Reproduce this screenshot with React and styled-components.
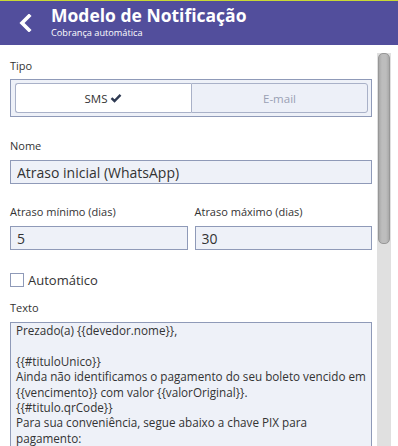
import React from "react";
import styled, { createGlobalStyle } from "styled-components";

const Global = createGlobalStyle`
  html, body { margin: 0; padding: 0; background: #fff; }
  body { font-family: "Open Sans", "Lato", sans-serif; color: #333; }
  * { box-sizing: border-box; }
`;

const Screen = styled.div`
  width: 398px;
  height: 446px;
  display: flex;
  flex-direction: column;
  overflow: hidden;
`;

const Header = styled.header`
  flex: 0 0 45px;
  background: #524e9c;
  border-top: 1px solid #c9d834;
  display: flex;
  align-items: center;
  padding-left: 18px;
  gap: 19px;
  color: #fff;
`;

const Back = styled.button`
  border: 0;
  background: none;
  padding: 0;
  width: 14px;
  height: 18px;
  display: flex;
  cursor: pointer;
`;

const Titles = styled.div`
  display: flex;
  flex-direction: column;
  gap: 2px;
  margin-top: -3px;
`;

const Title = styled.h1`
  margin: 0;
  font-size: 17.5px;
  font-weight: 700;
  line-height: 19px;
`;

const Subtitle = styled.div`
  font-size: 9.2px;
  line-height: 11px;
`;

const Body = styled.div`
  flex: 1;
  min-height: 0;
  display: flex;
`;

const Form = styled.div`
  flex: 1;
  min-width: 0;
  overflow: hidden;
  padding: 13px 0 0 10px;
  display: flex;
  flex-direction: column;
`;

const Rail = styled.div`
  flex: 0 0 14px;
  margin: 8px 7px 0 5px;
  background: #e0e0e0;
  display: flex;
  flex-direction: column;
  padding: 0 1px;
`;

const Thumb = styled.div`
  height: 191px;
  background: linear-gradient(90deg, #a9a9a9, #bdbdbd 30%, #bdbdbd 70%, #a9a9a9);
  border: 1px solid #979797;
  border-radius: 5px;
`;

const Field = styled.div`
  display: flex;
  flex-direction: column;
  margin-bottom: ${(p) => p.$mb || 0}px;
  flex: 1;
  min-width: 0;
`;

const Label = styled.label`
  font-size: 11px;
  color: #333;
  line-height: 16px;
  margin-bottom: ${(p) => p.$mb || 6}px;
`;

const Segmented = styled.div`
  display: flex;
  border: 1px solid #8f9ab8;
  background: #eef1f8;
  padding: 3px 3px 3px 4px;
  height: 38px;
`;

const SegButton = styled.button`
  flex: 1;
  border: 1px solid #a9b1c8;
  border-radius: ${(p) => (p.$first ? "3px 0 0 3px" : "0 3px 3px 0")};
  ${(p) => (p.$first ? "border-right: 0;" : "")}
  background: ${(p) => (p.$active ? "#fff" : "#edf0f8")};
  color: ${(p) => (p.$active ? "#333" : "#9aa0b4")};
  font-family: inherit;
  font-size: 11.5px;
  display: flex;
  align-items: center;
  justify-content: center;
  gap: 3px;
  padding: 0;
  cursor: pointer;
`;

const Input = styled.input`
  height: 24px;
  width: 100%;
  border: 1px solid #8f9ab8;
  background: #eef1f8;
  font-family: inherit;
  font-size: 14px;
  color: #333;
  padding: 0 6px;
  outline: none;
`;

const Row = styled.div`
  display: flex;
  gap: 7px;
  margin-bottom: 22px;
`;

const Check = styled.label`
  display: flex;
  align-items: center;
  gap: 4px;
  height: 16px;
  font-size: 13px;
  color: #333;
  margin-bottom: 12px;
`;

const Box = styled.span`
  width: 14px;
  height: 14px;
  border: 1px solid #8f9ab8;
  background: #fff;
  display: inline-block;
`;

const TextArea = styled.textarea`
  width: 100%;
  height: 505px;
  border: 1px solid #8f9ab8;
  background: #eef1f8;
  font-family: inherit;
  font-size: 11.7px;
  line-height: 15.4px;
  color: #333;
  padding: 0 5px 0 5px;
  resize: none;
  overflow: hidden;
  outline: none;
`;

const texto = `Prezado(a) {{devedor.nome}},

{{#tituloUnico}}
Ainda não identificamos o pagamento do seu boleto vencido em {{vencimento}} com valor {{valorOriginal}}.
{{#titulo.qrCode}}
Para sua conveniência, segue abaixo a chave PIX para pagamento:
{{split}}
{{titulo.qrCode}}
{{/titulo.qrCode}}
{{/tituloUnico}}

Caso já tenha efetuado o pagamento, por favor desconsidere esta mensagem.

Atenciosamente,
{{credor.nome}}`;

export default function App() {
  return (
    <>
      <Global />
      <Screen>
        <Header>
          <Back aria-label="Voltar">
            <svg width="14" height="18" viewBox="0 0 14 18">
              <path d="M11 2 L4 9 L11 16" fill="none" stroke="#fff" strokeWidth="3.6" strokeLinecap="square" />
            </svg>
          </Back>
          <Titles>
            <Title>Modelo de Notificação</Title>
            <Subtitle>Cobrança automática</Subtitle>
          </Titles>
        </Header>
        <Body>
          <Form>
            <Field $mb={21}>
              <Label $mb={5}>Tipo</Label>
              <Segmented>
                <SegButton $first $active>
                  SMS
                  <svg width="12" height="10" viewBox="0 0 12 10">
                    <path d="M1.5 5.2 L4.5 8 L10.5 1.8" fill="none" stroke="#2e3a52" strokeWidth="2.4" />
                  </svg>
                </SegButton>
                <SegButton>E-mail</SegButton>
              </Segmented>
            </Field>
            <Field $mb={20}>
              <Label>Nome</Label>
              <Input defaultValue="Atraso inicial (WhatsApp)" />
            </Field>
            <Row>
              <Field>
                <Label>Atraso mínimo (dias)</Label>
                <Input defaultValue="5" />
              </Field>
              <Field>
                <Label>Atraso máximo (dias)</Label>
                <Input defaultValue="30" />
              </Field>
            </Row>
            <Check>
              <Box />
              Automático
            </Check>
            <Field>
              <Label>Texto</Label>
              <TextArea defaultValue={texto} />
            </Field>
          </Form>
          <Rail>
            <Thumb />
          </Rail>
        </Body>
      </Screen>
    </>
  );
}
